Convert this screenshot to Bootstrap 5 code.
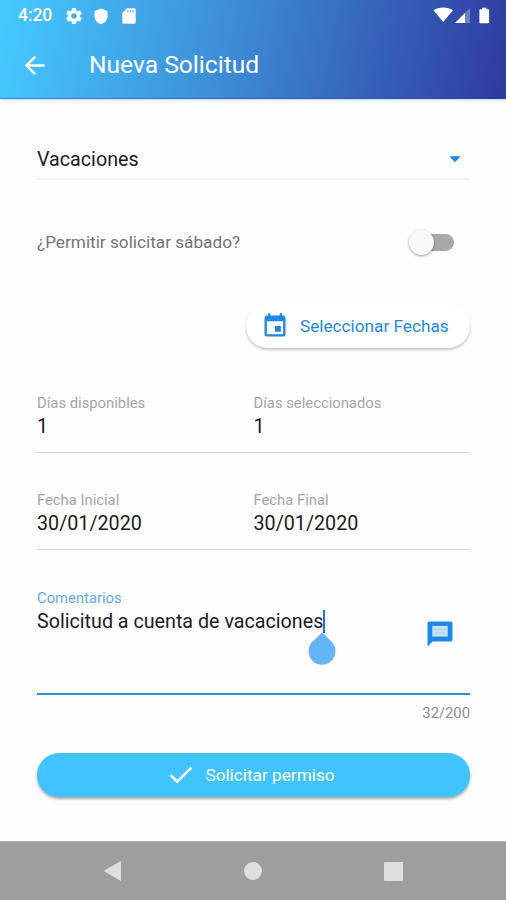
<!DOCTYPE html>
<html lang="es">
<head>
<meta charset="utf-8">
<meta name="viewport" content="width=device-width, initial-scale=1">
<title>Nueva Solicitud</title>
<link href="https://cdn.jsdelivr.net/npm/bootstrap@5.3.0/dist/css/bootstrap.min.css" rel="stylesheet">
<style>
body{font-family:Roboto,"Liberation Sans",sans-serif;background:#fefefe;color:#1c1c1c;line-height:1}
svg{display:block;flex:none}
.screen{height:900px;overflow:hidden}
.topbar{height:99px;color:#fff;background:linear-gradient(101deg,#45cbff,#3c88d4 48%,#2f3a9e);box-shadow:0 1px 3px rgba(0,0,0,.18);border-bottom:1px solid rgba(0,60,190,.4)}
.status{height:32px;padding:0 15px 0 18px}
.clock{font-size:17.6px;font-weight:500;letter-spacing:-.1px;width:34px;white-space:nowrap}
.ico-gear{margin-left:14px}
.ico-shield{margin-left:12px}
.ico-card{margin-left:14px}
.appbar{height:67px;padding:0 0 0 22px}
.title{font-size:24.6px;margin-left:41px}
.content{padding:0 36px 0 37px}
.rule{border-bottom:1px solid #d9d9d9}
.picker{height:81px;padding:49px 9px 0 0;border-bottom:2px solid #f1f1f1}
.picker svg{margin-top:8px}
.val{font-size:19.7px;line-height:24px}
.lbl{font-size:14.8px;line-height:18px;color:#a5a5a5;margin-bottom:3px}
.lbl-active{color:#64abf5}
.allow{height:40px;margin-top:42px;padding-right:15px;font-size:17.2px;color:#757575}
.allow span{padding-top:2px}
.toggle-track{width:37px;height:17px;border-radius:9px;background:#a9a9a9;margin-right:1px}
.toggle-knob{width:25px;height:25px;border-radius:50%;background:#fafafa;box-shadow:0 1px 3px rgba(0,0,0,.4);margin:-4px 0 0 -8px}
.btn-dates,.btn-dates:hover{height:44px;width:224px;margin-top:42px;padding:0 0 0 15px;border-radius:22px;background:#fff;color:#1e88e5;font-size:17.2px;box-shadow:0 2px 3px rgba(0,0,0,.22);border:0;line-height:1}
.btn-dates span{margin-left:11px;padding-top:1px}
.pair{height:59px}
.g1{margin-top:46px}.g2{margin-top:38px}.g3{margin-top:39px}
.comment{height:106px;border-bottom:2px solid #2c92d8}
.chat-icon{margin:30px 15px 0 0}
.caret{width:2px;height:23px;background:#1976e8}
.handle{position:absolute;left:-15px;top:22px}
.counter{font-size:14.8px;color:#8e8e8e;margin-top:9px;height:18px;line-height:18px}
.btn-send,.btn-send:hover{height:44px;margin-top:31px;padding:0 3px 0 0;border-radius:22px;background:#40c4ff;color:#fff;font-size:17.2px;box-shadow:0 2px 3px rgba(0,0,0,.35);border:0;line-height:1}
.btn-send span{margin-left:12px;padding-top:1px}
.sysnav{height:59px;background:#9e9e9e;border-top:1px solid #b4b4b4;padding:0 103px}
</style>
<script src="https://cdn.jsdelivr.net/npm/bootstrap@5.3.0/dist/js/bootstrap.bundle.min.js"></script>
</head>
<body>
<div class="screen d-flex flex-column">
  <header class="topbar flex-shrink-0">
    <div class="status d-flex align-items-center">
      <span class="clock">4:20</span>
      <svg class="ico-gear" width="16" height="16" viewBox="2 2 20 20" fill="#fff"><path d="M19.43 12.98c.04-.32.07-.64.07-.98s-.03-.66-.07-.98l2.11-1.65c.19-.15.24-.42.12-.64l-2-3.46c-.12-.22-.39-.3-.61-.22l-2.49 1c-.52-.4-1.08-.73-1.69-.98l-.38-2.65A.49.49 0 0 0 14 2h-4c-.25 0-.46.18-.49.42l-.38 2.65c-.61.25-1.17.59-1.69.98l-2.49-1c-.23-.09-.49 0-.61.22l-2 3.46c-.13.22-.07.49.12.64l2.11 1.65c-.04.32-.07.65-.07.98s.03.66.07.98l-2.11 1.65c-.19.15-.24.42-.12.64l2 3.46c.12.22.39.3.61.22l2.49-1c.52.4 1.08.73 1.69.98l.38 2.65c.03.24.24.42.49.42h4c.25 0 .46-.18.49-.42l.38-2.65c.61-.25 1.17-.59 1.69-.98l2.49 1c.23.09.49 0 .61-.22l2-3.46c.12-.22.07-.49-.12-.64zM12 15.500a3.500 3.500 0 1 1 0-7 3.500 3.500 0 0 1 0 7z"/></svg>
      <svg class="ico-shield" width="14" height="17" viewBox="0 0 14 17" fill="#fff"><path d="M7 .5l6.500 2.600v4.900c0 4-2.700 7.100-6.500 8.300C3.200 15.100.5 12 .5 8V3.100z"/></svg>
      <svg class="ico-card" width="14" height="16" viewBox="0 0 14 16" fill="#fff"><path fill-rule="evenodd" d="M5 .3h7.300c.8 0 1.400.6 1.400 1.400v12.600c0 .8-.6 1.400-1.400 1.400H1.700c-.8 0-1.400-.6-1.400-1.400V5zm.4 2v2.200h1.100V2.300zm2.500 0v2.200h1.100V2.300zm2.500 0v2.200h1.100V2.300z"/></svg>
      <svg class="ms-auto" width="58" height="18" viewBox="0 0 58 18" fill="#fff"><path d="M.4 3.200C5.600-.3 14.700-.3 20 3.200L10.200 15z"/><path d="M22 16L37 1v15z" fill-opacity=".3"/><path d="M22 16L32 6v10z"/><path d="M49 .8h4.500v1.500h1.600c.6 0 1 .4 1 1v12c0 .6-.4 1-1 1h-7.700c-.6 0-1-.4-1-1v-12c0-.6.4-1 1-1H49z"/></svg>
    </div>
    <div class="appbar d-flex align-items-center">
      <svg width="26" height="26" viewBox="0 0 26 26" fill="none" stroke="#fff" stroke-width="2.400"><path d="M22.500 12.500H5M13.300 3.700L4.500 12.500l8.800 8.800"/></svg>
      <span class="title">Nueva Solicitud</span>
    </div>
  </header>
  <main class="content flex-grow-1">
    <div class="picker d-flex justify-content-between">
      <span class="val">Vacaciones</span>
      <svg width="12" height="7" viewBox="0 0 12 7"><path d="M.3.300h11.400L6 6.300z" fill="#1e88e5"/></svg>
    </div>
    <div class="allow d-flex align-items-center justify-content-between">
      <span>¿Permitir solicitar sábado?</span>
      <div class="toggle-track"><div class="toggle-knob"></div></div>
    </div>
    <button class="btn btn-dates d-flex align-items-center ms-auto">
      <svg width="28" height="28" viewBox="0 0 24 24" fill="#1e88e5"><path d="M17 12h-5v5h5v-5zM16 1v2H8V1H6v2H5c-1.110 0-1.990.9-1.990 2L3 19a2 2 0 0 0 2 2h14c1.100 0 2-.9 2-2V5c0-1.100-.9-2-2-2h-1V1h-2zm3 18H5V8h14v11z"/></svg>
      <span>Seleccionar Fechas</span>
    </button>
    <div class="pair row g-0 rule g1">
      <div class="col-6"><div class="lbl">Días disponibles</div><div class="val">1</div></div>
      <div class="col-6"><div class="lbl">Días seleccionados</div><div class="val">1</div></div>
    </div>
    <div class="pair row g-0 rule g2">
      <div class="col-6"><div class="lbl">Fecha Inicial</div><div class="val">30/01/2020</div></div>
      <div class="col-6"><div class="lbl">Fecha Final</div><div class="val">30/01/2020</div></div>
    </div>
    <div class="comment g3 d-flex justify-content-between">
      <div>
        <div class="lbl lbl-active">Comentarios</div>
        <div class="d-flex"><span class="val">Solicitud a cuenta de vacaciones</span><span class="caret position-relative"><svg class="handle" width="28" height="34" viewBox="0 0 28 34"><path d="M14 .5l9.700 9.300a13.500 13.500 0 1 1-19.400 0z" fill="#64b5f6"/></svg></span></div>
      </div>
      <svg class="chat-icon" width="30" height="30" viewBox="0 0 24 24"><path d="M3.500 2h17c.8 0 1.500.7 1.500 1.500v13c0 .8-.7 1.500-1.500 1.500H6l-4 4V3.500C2 2.700 2.700 2 3.500 2z" fill="#1e88e5"/><path d="M5.800 5.500h12.400v8.500H5.800z" fill="#c8e1fa"/><path d="M6 8.300h12M6 11.300h12" stroke="#a9d0f6" stroke-width=".8"/></svg>
    </div>
    <div class="counter text-end">32/200</div>
    <button class="btn btn-send w-100 d-flex align-items-center justify-content-center">
      <svg width="24" height="20" viewBox="0 0 24 20" fill="none" stroke="#fff" stroke-width="2.500"><path d="M1.500 10l6.700 6.700L22.500 2.500"/></svg>
      <span>Solicitar permiso</span>
    </button>
  </main>
  <footer class="sysnav d-flex align-items-center justify-content-between flex-shrink-0">
    <svg width="19" height="22" viewBox="0 0 19 22"><path d="M.5 11L18 1v20z" fill="#dedede"/></svg>
    <svg width="18" height="18" viewBox="0 0 18 18"><circle cx="9" cy="9" r="9" fill="#dedede"/></svg>
    <svg width="19" height="19" viewBox="0 0 19 19"><rect width="19" height="19" rx="1" fill="#dedede"/></svg>
  </footer>
</div>
</body>
</html>
